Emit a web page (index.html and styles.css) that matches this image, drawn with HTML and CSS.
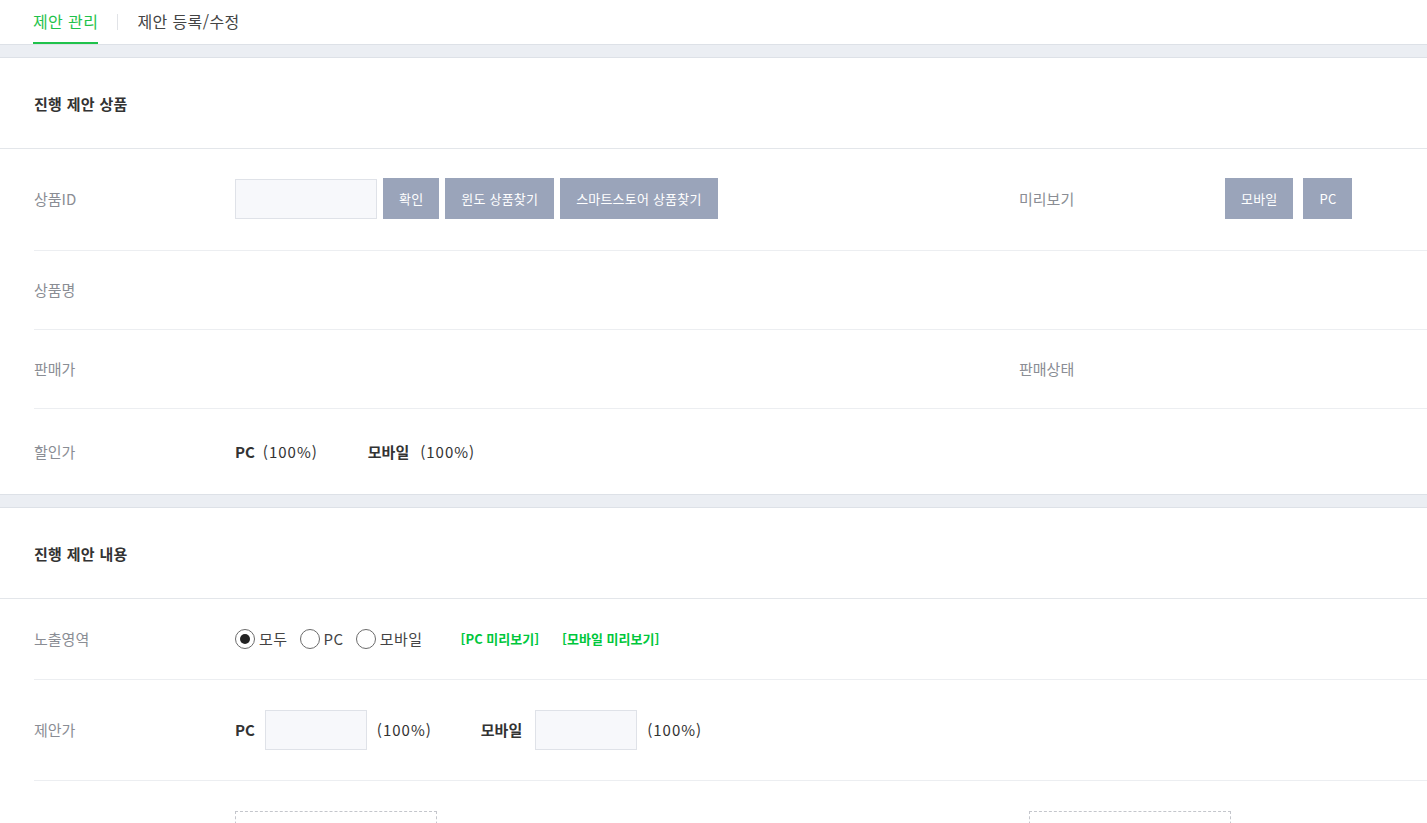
FILE: index.html
```html
<!DOCTYPE html>
<html lang="ko">
<head>
<meta charset="utf-8">
<title>제안 관리</title>
<link rel="stylesheet" href="styles.css">
</head>
<body>
<nav class="tabs">
  <a class="tab active">제안 관리</a>
  <span class="tab-sep"></span>
  <a class="tab">제안 등록/수정</a>
</nav>
<div class="band"></div>
<section class="section">
  <h2 class="section-title">진행 제안 상품</h2>
  <div class="rows">
    <div class="row row-tall">
      <div class="label">상품ID</div>
      <div class="value">
        <input class="field field-id" type="text">
        <button class="btn">확인</button>
        <button class="btn">윈도 상품찾기</button>
        <button class="btn">스마트스토어 상품찾기</button>
      </div>
      <div class="label">미리보기</div>
      <div class="value gap10">
        <button class="btn">모바일</button>
        <button class="btn">PC</button>
      </div>
    </div>
    <div class="row">
      <div class="label">상품명</div>
      <div class="value"></div>
    </div>
    <div class="row">
      <div class="label">판매가</div>
      <div class="value"></div>
      <div class="label">판매상태</div>
      <div class="value"></div>
    </div>
    <div class="row row-last">
      <div class="label">할인가</div>
      <div class="value">
        <span class="strong">PC</span><span class="pct">(100%)</span>
        <span class="strong spaced">모바일</span><span class="pct pct-m">(100%)</span>
      </div>
    </div>
  </div>
</section>
<div class="band"></div>
<section class="section">
  <h2 class="section-title">진행 제안 내용</h2>
  <div class="rows">
    <div class="row">
      <div class="label">노출영역</div>
      <div class="value">
        <label class="radio"><span class="dot checked"></span>모두</label>
        <label class="radio"><span class="dot"></span>PC</label>
        <label class="radio"><span class="dot"></span>모바일</label>
        <a class="link first">[PC 미리보기]</a>
        <a class="link">[모바일 미리보기]</a>
      </div>
    </div>
    <div class="row">
      <div class="label">제안가</div>
      <div class="value">
        <span class="strong">PC</span>
        <input class="field field-price" type="text">
        <span class="pct2">(100%)</span>
        <span class="strong spaced2">모바일</span>
        <input class="field field-price field-m" type="text">
        <span class="pct2">(100%)</span>
      </div>
    </div>
    <div class="row-open">
      <div class="dashbox"></div>
      <div class="dashbox"></div>
    </div>
  </div>
</section>
</body>
</html>
```

FILE: styles.css
```css
* { box-sizing: border-box; }
html, body { margin: 0; padding: 0; }
body {
  font-family: "Noto Sans CJK KR", "Noto Sans", sans-serif;
  color: #333;
  background: #fff;
  font-size: 15px;
  overflow: hidden;
  width: 1427px;
}
.tabs {
  display: flex;
  align-items: center;
  height: 44px;
  padding-left: 33px;
}
.tab {
  font-size: 16px;
  line-height: 20px;
  letter-spacing: 0.4px;
  color: #444;
  height: 44px;
  display: flex;
  align-items: center;
  padding-bottom: 2px;
}
.tab.active {
  color: #1fc24b;
  border-bottom: 2px solid #1fc24b;
  padding-bottom: 0;
}
.tab-sep {
  width: 1px;
  height: 16px;
  background: #e1e3e7;
  margin: 0 19px 0 19px;
}
.band {
  height: 14px;
  background: #ebeef3;
  border-top: 1px solid #dde1e7;
  border-bottom: 1px solid #dde1e7;
}
.section-title {
  margin: 0;
  height: 91px;
  padding-left: 34px;
  display: flex;
  align-items: center;
  font-size: 15px;
  font-weight: bold;
  letter-spacing: 0.3px;
  color: #333;
  border-bottom: 1px solid #e3e6ea;
}
.rows { padding-left: 34px; }
.row {
  display: grid;
  grid-template-columns: 201px 784px 206px 1fr;
  align-items: center;
  padding: 30px 0;
  min-height: 79px;
  border-bottom: 1px solid #eceef1;
}
.row-tall { padding: 29px 0 31px; }
.row-last { border-bottom: none; min-height: 85px; padding-top: 30px; }
.row-open {
  display: grid;
  grid-template-columns: 794px 202px;
  padding: 30px 0 0 201px;
}
.label {
  color: #8a8d94;
  font-size: 15px;
  line-height: 18px;
}
.value {
  display: flex;
  align-items: center;
  gap: 6px;
  font-size: 15px;
  line-height: 18px;
}
.value.gap10 { gap: 10px; }
.field {
  height: 40px;
  border: 1px solid #dfe2e8;
  background: #f7f8fb;
  margin: 0;
  padding: 0 8px;
  font: inherit;
  outline: none;
}
.field-id { width: 142px; }
.field-price { width: 102px; margin-left: 4px; }
.field-m { margin-left: 7px; }
.btn {
  height: 41px;
  border: none;
  margin: 0;
  background: #9aa4ba;
  color: #fff;
  font-family: inherit;
  font-size: 13px;
  letter-spacing: 0.2px;
  padding: 0 16px;
  cursor: pointer;
}
.strong { font-weight: bold; color: #333; }
.spaced { margin-left: 44px; }
.spaced2 { margin-left: 43px; }
.pct { color: #333; margin-left: 2px; letter-spacing: 1px; }
.pct-m { margin-left: 5px; }
.pct2 { color: #333; margin-left: 4px; letter-spacing: 1px; }
.radio {
  display: flex;
  align-items: center;
  gap: 4px;
  color: #444;
  margin-right: 6px;
  letter-spacing: 0.5px;
}
.dot {
  width: 20px;
  height: 20px;
  border: 1.5px solid #6b6b6b;
  border-radius: 50%;
  display: inline-flex;
  align-items: center;
  justify-content: center;
}
.dot.checked::after {
  content: "";
  width: 10px;
  height: 10px;
  border-radius: 50%;
  background: #222;
}
.link {
  color: #00c73c;
  font-weight: bold;
  font-size: 13px;
  margin-right: 17px;
}
.link.first { margin-left: 26px; }
.dashbox {
  width: 202px;
  height: 40px;
  border: 1px dashed #c4c6cc;
}
```
